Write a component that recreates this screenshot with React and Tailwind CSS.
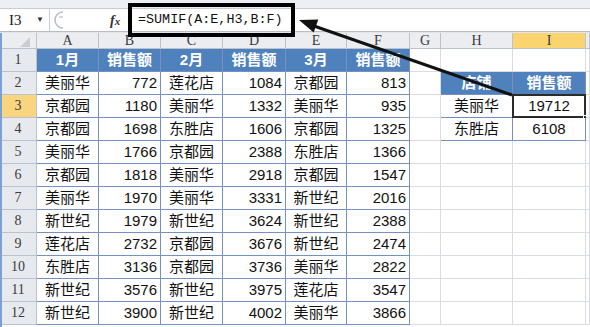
import React from "react";

const W = ["w-[37px]", "w-[62px]", "w-[62px]", "w-[62px]", "w-[63px]", "w-[61px]", "w-[63px]", "w-[31px]", "w-[72px]", "w-[73px]", "w-[4px]"];
const LETTERS = ["", "A", "B", "C", "D", "E", "F", "G", "H", "I", ""];
const SERIF = { fontFamily: '"Liberation Serif", "DejaVu Serif", serif' };

const data = [
  ["美丽华", 772, "莲花店", 1084, "京都园", 813],
  ["京都园", 1180, "美丽华", 1332, "美丽华", 935],
  ["京都园", 1698, "东胜店", 1606, "京都园", 1325],
  ["美丽华", 1766, "京都园", 2388, "东胜店", 1366],
  ["京都园", 1818, "美丽华", 2918, "京都园", 1547],
  ["美丽华", 1970, "美丽华", 3331, "新世纪", 2016],
  ["新世纪", 1979, "新世纪", 3624, "新世纪", 2388],
  ["莲花店", 2732, "京都园", 3676, "新世纪", 2474],
  ["东胜店", 3136, "京都园", 3736, "美丽华", 2822],
  ["新世纪", 3576, "新世纪", 3975, "莲花店", 3547],
  ["新世纪", 3900, "新世纪", 4002, "美丽华", 3866],
];

const side = { 2: ["店铺", "销售额"], 3: ["美丽华", "19712"], 4: ["东胜店", "6108"] };

function Cell({ col, row, children }) {
  const inMain = row >= 1 && col >= 1 && col <= 6;
  const inSide = side[row] && (col === 8 || col === 9);
  const head = (inMain && row === 1) || (inSide && row === 2);
  const border = inMain || inSide ? "border-[#7491c0]" : "border-[#d9dde3]";
  const align = inSide || head ? "justify-center" : col % 2 === 0 ? "justify-end pr-[3px]" : "justify-center";
  const selected = row === 3 && col === 9;
  return (
    <div
      className={`${W[col]} relative h-full shrink-0 flex items-center border-r border-b ${border} ${align} ${
        head ? "bg-[#4f81bd] text-white font-bold" : "bg-white text-[#111]"
      }`}
    >
      {children}
      {selected && (
        <div className="absolute -left-px -top-px w-[74px] h-[24px] border-2 border-[#2b2b2b]">
          <div className="absolute -right-[4px] -bottom-[4px] w-[5px] h-[5px] bg-[#2b2b2b] border border-white" />
        </div>
      )}
    </div>
  );
}

function Row({ r }) {
  const vals = r >= 2 ? data[r - 2] : null;
  const sel = r === 3;
  return (
    <div className="flex h-[23px]">
      <div
        className={`${W[0]} shrink-0 h-full flex items-end justify-center pb-[1px] border-r border-b border-[#b9c3cf] text-[14px] text-[#3b3b3b] ${
          sel ? "bg-[#f8d57e]" : "bg-[#e6e9ee]"
        }`}
        style={SERIF}
      >
        {r}
      </div>
      {[1, 2, 3, 4, 5, 6, 7, 8, 9, 10].map((c) => {
        let content = null;
        if (c <= 6) {
          if (r === 1) content = ["1月", "销售额", "2月", "销售额", "3月", "销售额"][c - 1];
          else content = vals[c - 1];
        } else if ((c === 8 || c === 9) && side[r]) {
          content = side[r][c - 8];
        }
        return (
          <Cell key={c} col={c} row={r}>
            {content}
          </Cell>
        );
      })}
    </div>
  );
}

export default function App() {
  return (
    <div
      className="relative w-[590px] h-[327px] overflow-hidden bg-white"
      style={{ fontFamily: '"Liberation Sans", "Noto Sans CJK SC", sans-serif' }}
    >
      {/* top strip */}
      <div className="h-[9px] bg-[#eceff3] border-b border-[#c9ccd1]" />

      {/* formula bar */}
      <div className="flex h-[23px] bg-white border-b border-[#b7bcc4]">
        <div className="w-[50px] flex items-center justify-between pl-[9px] pr-[5px] border-r border-[#c9ccd1]">
          <span className="text-[15px] text-[#222]" style={SERIF}>
            I3
          </span>
          <span className="text-[8px] text-[#333]">▼</span>
        </div>
        <div className="w-[78px] flex items-center pl-[2px]">
          <svg width="16" height="18" viewBox="0 0 16 18">
            <path d="M11 1 A8 8 0 0 0 11 17" fill="none" stroke="#b8bcc2" strokeWidth="1.5" />
            <path d="M7 6 h4" stroke="#b8bcc2" strokeWidth="1.2" />
          </svg>
          <span className="ml-[42px] text-[14px] italic font-bold text-[#333]" style={SERIF}>
            f<span className="text-[11px]">x</span>
          </span>
        </div>
        <div
          className="flex-1 flex items-center pl-[10px] text-[13.4px] text-[#111]"
          style={{ fontFamily: '"Liberation Mono", monospace' }}
        >
          =SUMIF(A:E,H3,B:F)
        </div>
      </div>
      <div className="h-[1px] bg-[#e2e5ea]" />

      {/* column headers */}
      <div className="flex h-[16px]">
        {LETTERS.map((l, i) => (
          <div
            key={i}
            className={`${W[i]} shrink-0 flex items-center justify-center border-r border-b border-[#b9c3cf] text-[14px] text-[#3b3b3b] ${
              i === 9 ? "bg-[#f9d46f]" : "bg-[#ebedf0]"
            }`}
            style={SERIF}
          >
            {i === 0 ? (
              <svg width="12" height="12" viewBox="0 0 12 12" className="ml-[14px] mt-[2px]">
                <path d="M11 1 L11 11 L1 11 Z" fill="#c9cdd3" />
              </svg>
            ) : (
              l
            )}
          </div>
        ))}
      </div>

      {/* rows */}
      <div className="text-[15px]">
        {[1, 2, 3, 4, 5, 6, 7, 8, 9, 10, 11, 12].map((r) => (
          <Row key={r} r={r} />
        ))}
      </div>

      {/* left blue edge */}
      <div className="absolute left-0 top-[33px] w-[2px] h-[294px] bg-[#7aa0d4]" />

      {/* annotation box */}
      <div className="absolute left-[128px] top-[3px] w-[167px] h-[34px] border-4 border-black" />

      {/* annotation arrow */}
      <svg className="absolute left-0 top-0" width="590" height="327" viewBox="0 0 590 327">
        <line x1="512" y1="95" x2="314" y2="26" stroke="#111" strokeWidth="3" />
        <polygon points="299,20 313.7,32.6 318.3,19.4" fill="#111" />
      </svg>
    </div>
  );
}
